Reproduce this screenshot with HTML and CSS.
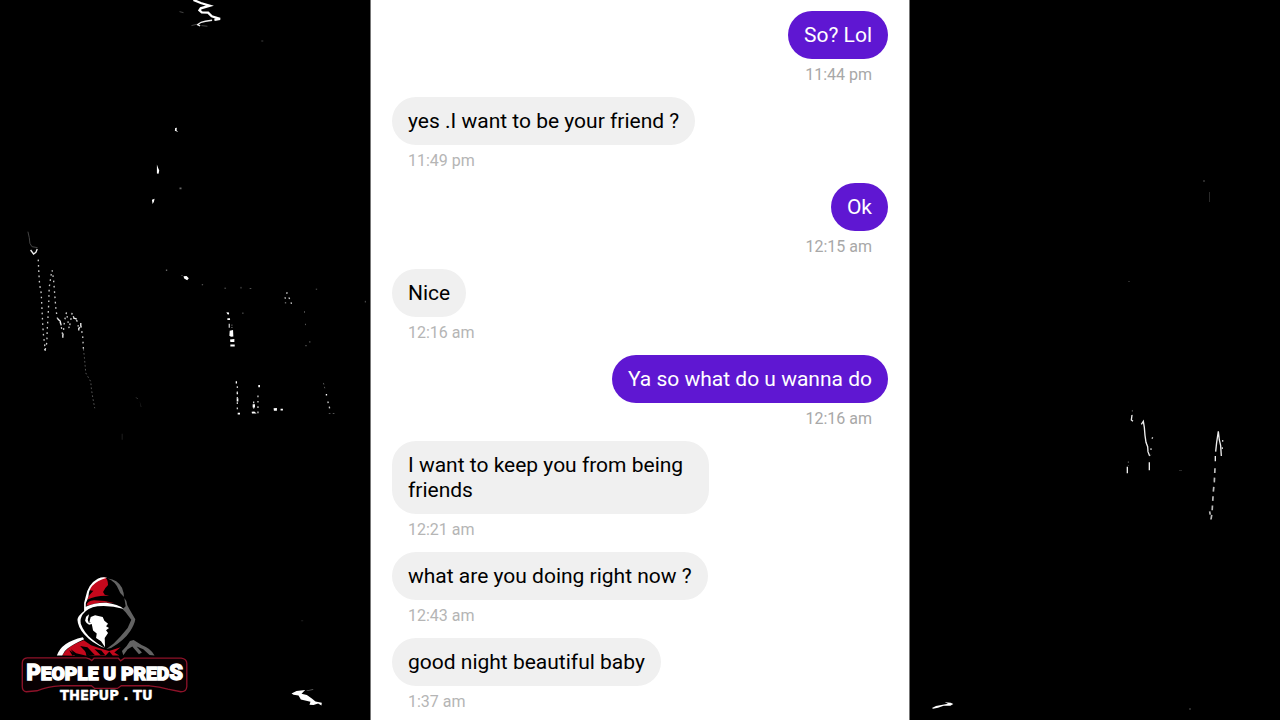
FILE: index.html
```html
<!DOCTYPE html>
<html lang="en">
<head>
<meta charset="utf-8">
<meta name="viewport" content="width=device-width, initial-scale=1">
<title>Conversation</title>
<link rel="stylesheet" href="styles.css">
</head>
<body>
<div class="stage">
  <aside class="side">
    <svg class="art" viewBox="0 0 371 720" role="img" aria-label="People U Preds, thepup.tv">
      <g transform="translate(180 0) scale(.3333)" class="streak">
        <path class="bold" d="M42 0L64 9L91 17L64 25L60 31L67 37L86 38L97 49L122 57L105 60"/>
        <path class="mid" d="M98 61L78 64L65 67L54 74L62 78"/>
        <path class="faint" d="M0 35L12 38M36 77L52 73M66 77L84 79"/>
      </g>
      <g transform="translate(10 220) scale(.3333)" class="streak">
        <path class="faint" d="M54 37L58 55L60 72L66 82L83 85"/>
        <path class="mid" d="M62 92L71 104L78 99L82 89"/>
        <path class="dots" d="M85 121L87 163L89 195L94 222L97 285L99 324L101 350L106 392L111 370L112 333L115 285L117 240L118 205L121 185L124 166L127 153L131 180L135 230L138 268L142 296L151 309L155 326L159 352L164 306L170 280L178 328L187 281L193 298L203 307L207 331L213 317L219 355L221 390"/>
        <path class="mid" d="M144 300L151 306L154 319M190 296L201 300M207 326V334M213 312V322M104 390L107 395M159 347V356"/>
        <path class="dim" d="M221 390L224 416L226 439L228 462L243 488L245 510L249 536L255 568M380 536L384 540"/>
      </g>
      <g transform="translate(140 110) scale(.3333)">
        <path class="spark" d="M107 55L112 54L111 62L116 67L106 63ZM52 165L56 176L59 183L57 193L52 192ZM37 271L45 268L43 277L39 284ZM132 501L141 500L148 507L143 513L134 508Z"/>
        <path class="shade" d="M120 234H126V239H120ZM79 481H83V485H79ZM126 497H129V500H126ZM187 525H191V528H187Z"/>
      </g>
      <g transform="translate(210 270) scale(.3333)" class="streak">
        <path class="spark" d="M51 129L59 130V136L54 135ZM54 147H62V153H54ZM58 164H61V176H58ZM61 185L71 183L72 202L65 203L60 200ZM62 211L75 210V219L63 219ZM63 226H76V232H63ZM79 337H83V344H79ZM82 371H86V376H82ZM82 388H87V398H82ZM147 348H152V355H147ZM130 406H137V416H130ZM127 429L135 428L142 434H128ZM193 418L203 417V426H194ZM214 420H221V425H214ZM85 432H92V437H85ZM350 375H354V380H350Z"/>
        <path class="dots" d="M234 69L228 85L229 102M239 85L245 97L249 113M356 398L360 410L362 421M133 398V427M146 380V434M84 352V425"/>
        <path class="dim" d="M45 57H50M95 53V61M121 58H127M320 60H324M98 132H109M286 126V132M289 164V168M302 216V222M288 230H294M343 342L347 358M359 434H376M469 95V101M65 168H77M65 175H77"/>
      </g>
      <g transform="translate(270 670) scale(.3333)">
        <path class="spark" d="M67 76L82 69L108 66L97 77L113 81L128 91L139 100L158 104L157 112L147 106L133 111L121 110L124 101L95 94L88 82L73 80Z"/>
        <path class="shade" d="M112 67L133 63L131 66L113 69Z"/>
      </g>
      <path class="shade" d="M262 40h2v2h-2zM122 435h1v6h-1zM140 402l2 6h-1zM302 622h2v1h-2z" opacity=".3"/>

      <g transform="translate(10 570) scale(.3333)">
        <g transform="translate(135 6)">
          <path class="red" d="M97 88Q103 72 116 61Q102 62 105 52Q118 29 150 20Q160 26 160 44Q152 51 145 65L150 73L164 77Q128 74 97 88ZM95 106Q98 91 118 90Q150 90 181 99Q145 94 120 100Q108 103 95 106Z"/>
          <path class="white" d="M88 98L93 78Q101 40 129 25Q144 18 157 22Q128 29 112 47Q102 60 101 78L97 90Q92 96 93 109Q120 96 155 97Q190 101 208 116Q165 104 128 108Q98 113 84 132Q75 145 78 160Q87 186 112 207Q130 222 151 234Q113 220 88 192Q69 169 68 148Q69 137 88 122Z"/>
          <path class="gray" d="M159 24Q189 27 202 52Q208 67 208 80L216 86L208 80Q195 70 191 56Q182 33 159 24ZM209 83Q218 92 218 105L227 121L242 147Q240 162 227 182Q208 211 169 233L155 236L177 220L198 198L219 173L230 148L213 126L204 117L213 108Z"/>
          <path class="white" d="M103 132L94 139L91 151Q95 160 103 163L111 161L115 181L126 190L124 203L139 213L151 231L150 203L160 188L154 180L163 173L154 168L160 160L149 151L144 140L121 135L108 140L104 154L109 156L102 157L99 148Z"/>
          <path class="red" d="M22 256Q39 226 87 210L109 225L142 236L163 242L198 231L179 247L194 256H174L164 244L153 256H104L91 239L95 257L64 249L48 237L60 257Z"/>
          <path class="white" d="M6 256Q20 215 84 201L88 207Q57 221 39 234Q27 242 22 256Z"/>
          <path class="black" d="M76 227L98 231L120 254L104 257ZM43 239L62 252L53 257ZM119 236L140 241L151 254L138 255Z"/>
          <path class="gray" d="M202 242Q216 230 226 212L237 209L261 224Q289 234 300 256L285 254L266 237L246 229L262 247L253 252L233 229L219 237L206 255Z"/>
        </g>
        <path class="plate" d="M52 269H229Q240 271 246 277L253 270H326L333 278L344 270H515Q532 272 532 287V355Q531 371 514 371L475 363Q450 355 420 353H335L323 361H255L245 353H151Q114 355 81 368L49 371Q37 369 37 355V285Q37 270 52 269Z"/>
        <text class="wordmark" x="285" y="335" text-anchor="middle"><tspan class="cap">P</tspan>EOPLE U PRED<tspan class="cap">S</tspan></text>
        <text class="site" x="290" y="395" text-anchor="middle">THEPUP . TU</text>
      </g>
    </svg>
  </aside>

  <main class="chat">
    <div class="message sent"><p class="bubble">So? Lol</p><time class="time">11:44 pm</time></div>
    <div class="message"><p class="bubble">yes .I want to be your friend ?</p><time class="time">11:49 pm</time></div>
    <div class="message sent"><p class="bubble">Ok</p><time class="time">12:15 am</time></div>
    <div class="message"><p class="bubble">Nice</p><time class="time">12:16 am</time></div>
    <div class="message sent"><p class="bubble">Ya so what do u wanna do</p><time class="time">12:16 am</time></div>
    <div class="message"><p class="bubble">I want to keep you from being friends</p><time class="time">12:21 am</time></div>
    <div class="message"><p class="bubble">what are you doing right now ?</p><time class="time">12:43 am</time></div>
    <div class="message"><p class="bubble">good night beautiful baby</p><time class="time">1:37 am</time></div>
  </main>

  <aside class="side">
    <svg class="art" viewBox="910 0 370 720" aria-hidden="true">
      <g transform="translate(1100 400) scale(.3333)" class="streak">
        <path class="mid" d="M96 45L94 60L99 64M124 73L130 64L133 82L135 106L138 127L143 140L144 155L149 168M148 187V211M82 200V220M355 94L350 127L347 155M355 94L358 120L362 137L364 168M346 168V184"/>
        <path class="dash" d="M345 205L343 245L340 275L338 307L336 340L333 358L329 334"/>
        <path class="dots" d="M158 112L153 124M153 145V150M368 120V125M367 142V152"/>
        <path class="dim" d="M97 30V43M85 184V198M150 168L154 162"/>
      </g>
      <g transform="translate(910 670) scale(.3333)">
        <path class="spark" d="M66 114L78 108L114 101L104 97L122 98L130 102L121 107L101 107L84 113L69 116Z"/>
      </g>
      <path class="shade" d="M1203 180h2v2h-2zM1209 192h1v10h-1zM1128 281h2v1h-2zM1179 470h3v1h-3zM1189 708h2v2h-2z" opacity=".4"/>
    </svg>
  </aside>
</div>
</body>
</html>
```
FILE: styles.css
```css
* { box-sizing: border-box; }

body {
  margin: 0;
  background: #000;
  font-family: Roboto, "Liberation Sans", sans-serif;
}

.stage {
  display: grid;
  grid-template-columns: 370fr 540fr 370fr;
  min-height: 100vh;
}

.side { min-width: 0; }

.art {
  display: block;
  width: 100%;
  height: auto;
}

.chat {
  display: flex;
  flex-direction: column;
  gap: 8px;
  padding: 11px 21px 0;
  background: #fff;
  border-left: 1px solid #777;
  border-right: 1px solid #777;
}

.message {
  display: flex;
  flex-direction: column;
  align-items: flex-start;
}

.sent { align-items: flex-end; }

.bubble {
  max-width: 64%;
  margin: 0;
  padding: 12px 16px 11px;
  border-radius: 24px;
  background: #f0f0f0;
  color: #000;
  font-size: 21px;
  line-height: 25px;
}

.sent .bubble {
  background: #5f17d2;
  color: #fff;
}

.time {
  padding: 6px 16px 4px;
  color: #b5b5b5;
  font-size: 16px;
  line-height: 20px;
}

.sent .time { color: #a8a8a8; }

.streak path { fill: none; stroke: #eee; stroke-width: 3; }
.streak .bold { stroke: #fff; stroke-width: 7; }
.streak .mid { stroke-width: 4; }
.streak .faint { stroke: #444; }
.streak .dim { stroke: #555; stroke-dasharray: 5 7; }
.streak .dots { stroke: #ccc; stroke-width: 4; stroke-dasharray: 5 11; }
.streak .dash { stroke: #bbb; stroke-width: 5; stroke-dasharray: 14 14; }
.spark, .streak .spark { fill: #fff; stroke: none; }
.shade { fill: #666; }

.red { fill: #c4081c; }
.white { fill: #fff; }
.gray { fill: #636363; }
.black { fill: #000; }
.plate { fill: #080002; stroke: #8e1229; stroke-width: 4; }

.wordmark {
  fill: #fff;
  stroke: #fff;
  stroke-width: 4;
  font-family: Roboto, "Liberation Sans", sans-serif;
  font-size: 58px;
  font-weight: 900;
}

.cap { font-size: 66px; }

.site {
  fill: #fff;
  stroke: #fff;
  stroke-width: 1;
  font-family: "DejaVu Sans Condensed", "DejaVu Sans", sans-serif;
  font-size: 44px;
  font-weight: 700;
}
```
